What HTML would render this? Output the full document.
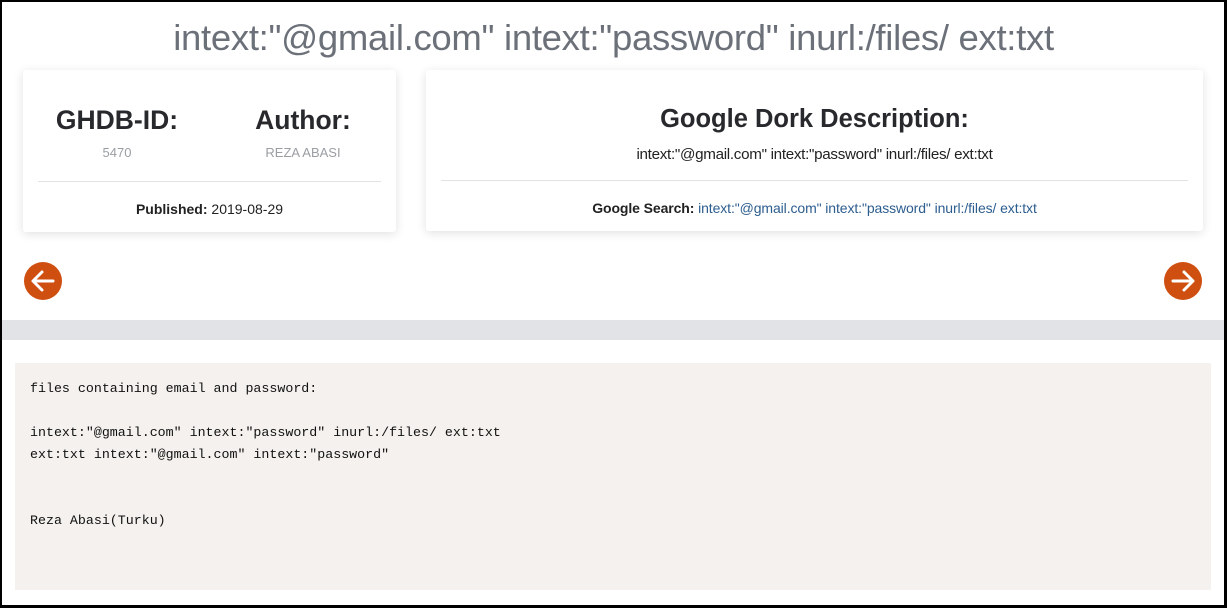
<!DOCTYPE html>
<html><head><meta charset="utf-8"><style>
*{box-sizing:border-box;margin:0;padding:0}
body{width:1227px;height:608px;overflow:hidden;background:#fff;font-family:"Liberation Sans",sans-serif;position:relative}
.frame{position:absolute;left:0;top:0;width:1227px;height:608px;border:2px solid #000;border-right-width:3px;border-bottom-width:3px;pointer-events:none;z-index:10}
h1{position:absolute;top:17px;left:0;width:1227px;text-align:center;font-weight:normal;font-size:36.5px;color:#6b7079;letter-spacing:-0.3px}
.card{position:absolute;background:#fff;box-shadow:0 2px 10px rgba(0,0,0,0.12);border-radius:3px}
.c1{left:23px;top:70px;width:373px;height:162px}
.c2{left:426px;top:70px;width:777px;height:161px}
.hd{position:absolute;font-weight:bold;font-size:26.5px;color:#27292c;text-align:center}
.sub{position:absolute;font-size:13px;color:#9a9ea3;text-align:center}
.hr{position:absolute;height:1px;background:#e2e2e2}
.sm{position:absolute;font-size:14px;color:#222;text-align:center;width:100%}
.circ{position:absolute;width:38px;height:38px;border-radius:50%;background:#cf4f10;top:262px}
.band{position:absolute;left:0;top:320px;width:1227px;height:20px;background:#e2e3e7}
.code{position:absolute;left:15px;top:363px;width:1196px;height:227px;background:#f4f1ee;padding:15px 15px;font-family:"Liberation Mono",monospace;font-size:13.3px;line-height:22px;color:#111;white-space:pre}
a{color:#2c5d8f;text-decoration:none}
</style></head><body>
<div class="frame"></div>
<h1>intext:"@gmail.com" intext:"password" inurl:/files/ ext:txt</h1>
<div class="card c1">
 <div class="hd" style="left:14px;width:160px;top:35px">GHDB-ID:</div>
 <div class="sub" style="left:14px;width:160px;top:75px">5470</div>
 <div class="hd" style="left:210px;width:140px;top:35px">Author:</div>
 <div class="sub" style="left:210px;width:140px;top:75px">REZA ABASI</div>
 <div class="hr" style="left:15px;width:343px;top:111px"></div>
 <div class="sm" style="top:131px">
<b>Published:</b> 2019-08-29</div>
</div>
<div class="card c2">
 <div class="hd" style="left:0;width:777px;top:35px;font-size:25.5px">Google Dork Description:</div>
 <div class="sm" style="top:76px;font-size:15.2px;letter-spacing:-0.3px">intext:"@gmail.com" intext:"password" inurl:/files/ ext:txt</div>
 <div class="hr" style="left:15px;width:747px;top:110px"></div>
 <div class="sm" style="top:130px;font-size:14px;letter-spacing:-0.1px"><b>Google Search:</b> <a>intext:"@gmail.com" intext:"password" inurl:/files/ ext:txt</a></div>
</div>
<div class="circ" style="left:24px"><svg width="38" height="38" viewBox="0 0 38 38"><path d="M29 19H10M18 10l-9 9 9 9" fill="none" stroke="#fff" stroke-width="3" stroke-linecap="round" stroke-linejoin="round"/></svg></div>
<div class="circ" style="left:1164px"><svg width="38" height="38" viewBox="0 0 38 38"><path d="M9 19h19M20 10l9 9-9 9" fill="none" stroke="#fff" stroke-width="3" stroke-linecap="round" stroke-linejoin="round"/></svg></div>
<div class="band"></div>
<div class="code">files containing email and password:

intext:"@gmail.com" intext:"password" inurl:/files/ ext:txt
ext:txt intext:"@gmail.com" intext:"password"


Reza Abasi(Turku)</div>
</body></html>
